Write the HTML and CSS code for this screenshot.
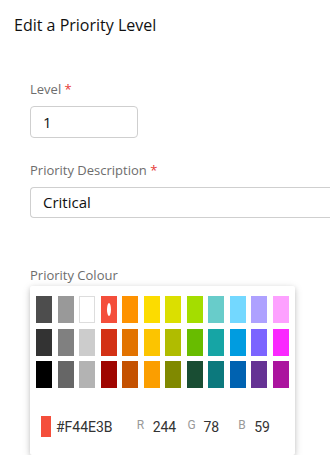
FILE: index.html
```html
<!DOCTYPE html>
<html lang="en">
<head>
    <meta charset="UTF-8">
    <meta name="viewport" content="width=device-width, initial-scale=1.0">
    <title>Edit a Priority Level</title>
    <link rel="stylesheet" href="styles.css">
</head>
<body>
    <h1 class="page-title">Edit a Priority Level</h1>

    <form class="priority-form">
        <div class="field field-level">
            <label class="field-label">Level <span class="required">*</span></label>
            <div class="input input-level">1</div>
        </div>

        <div class="field field-description">
            <label class="field-label">Priority Description <span class="required">*</span></label>
            <div class="input input-wide">Critical</div>
        </div>

        <div class="field">
            <label class="field-label">Priority Colour</label>
            <div class="picker">
                <div class="swatches">
                    <span class="swatch" style="background:#4D4D4D"></span>
                    <span class="swatch" style="background:#999999"></span>
                    <span class="swatch swatch-white" style="background:#FFFFFF"></span>
                    <span class="swatch selected" style="background:#F44E3B"></span>
                    <span class="swatch" style="background:#FE9200"></span>
                    <span class="swatch" style="background:#FCDC00"></span>
                    <span class="swatch" style="background:#DBDF00"></span>
                    <span class="swatch" style="background:#A4DD00"></span>
                    <span class="swatch" style="background:#68CCCA"></span>
                    <span class="swatch" style="background:#73D8FF"></span>
                    <span class="swatch" style="background:#AEA1FF"></span>
                    <span class="swatch" style="background:#FDA1FF"></span>

                    <span class="swatch" style="background:#333333"></span>
                    <span class="swatch" style="background:#808080"></span>
                    <span class="swatch" style="background:#CCCCCC"></span>
                    <span class="swatch" style="background:#D33115"></span>
                    <span class="swatch" style="background:#E27300"></span>
                    <span class="swatch" style="background:#FCC400"></span>
                    <span class="swatch" style="background:#B0BC00"></span>
                    <span class="swatch" style="background:#68BC00"></span>
                    <span class="swatch" style="background:#16A5A5"></span>
                    <span class="swatch" style="background:#009CE0"></span>
                    <span class="swatch" style="background:#7B64FF"></span>
                    <span class="swatch" style="background:#FA28FF"></span>

                    <span class="swatch" style="background:#000000"></span>
                    <span class="swatch" style="background:#666666"></span>
                    <span class="swatch" style="background:#B3B3B3"></span>
                    <span class="swatch" style="background:#9F0500"></span>
                    <span class="swatch" style="background:#C45100"></span>
                    <span class="swatch" style="background:#FB9E00"></span>
                    <span class="swatch" style="background:#808900"></span>
                    <span class="swatch" style="background:#194D33"></span>
                    <span class="swatch" style="background:#0C797D"></span>
                    <span class="swatch" style="background:#0062B1"></span>
                    <span class="swatch" style="background:#653294"></span>
                    <span class="swatch" style="background:#AB149E"></span>
                </div>

                <div class="picker-fields">
                    <span class="current-colour"></span>
                    <span class="hex-value">#F44E3B</span>
                    <span class="channel"><span class="channel-label">R</span>244</span>
                    <span class="channel"><span class="channel-label">G</span>78</span>
                    <span class="channel"><span class="channel-label">B</span>59</span>
                </div>
            </div>
        </div>
    </form>
</body>
</html>
```

FILE: styles.css
```css
body {
    font-family: 'Open Sans', sans-serif;
    background-color: #fff;
    color: #111;
    margin: 0;
}

.page-title {
    font-size: 16px;
    font-weight: 400;
    margin: 0;
    padding: 15px 14px 0;
    line-height: 20px;
}

.priority-form {
    padding: 46px 0 0 30px;
}

.field-level {
    margin-bottom: 24px;
}

.field-description {
    margin-bottom: 49px;
}

.field-label {
    display: block;
    font-size: 13px;
    line-height: 16px;
    color: #6d6d6d;
    margin-bottom: 9px;
}

.required {
    color: #e53935;
}

.input {
    box-sizing: border-box;
    height: 32px;
    border: 1px solid #cfcfcf;
    border-radius: 4px;
    padding: 0 12px;
    font-size: 15px;
    line-height: 30px;
    color: #111;
}

.input-level {
    width: 108px;
}

.input-wide {
    width: 300px;
    height: 31px;
    line-height: 29px;
    border-right: none;
    border-radius: 4px 0 0 4px;
}

.picker {
    width: 265px;
    box-sizing: border-box;
    padding: 10px 6px 0;
    height: 169px;
    border-radius: 2px;
    box-shadow: 0 2px 10px rgba(0, 0, 0, 0.12), 0 2px 5px rgba(0, 0, 0, 0.16);
    margin-top: -6px;
}

.swatches {
    display: grid;
    grid-template-columns: repeat(12, 1fr);
    column-gap: 5.5px;
    row-gap: 5.5px;
}

.swatch {
    height: 27px;
    position: relative;
}

.swatch-white {
    box-shadow: inset 0 0 0 1px #ddd;
}

.swatch.selected::after {
    content: '';
    position: absolute;
    left: 50%;
    top: 50%;
    width: 4px;
    height: 13px;
    margin: -6.5px 0 0 -2px;
    border-radius: 50%;
    background: #fff;
}

.picker-fields {
    display: flex;
    align-items: center;
    margin-top: 28px;
    padding-left: 5px;
    font-family: Roboto, sans-serif;
    font-size: 14px;
    color: #333;
}

.current-colour {
    width: 10px;
    height: 21px;
    background: #F44E3B;
    margin-right: 5px;
}

.hex-value {
    width: 81px;
}

.channel {
    width: 51px;
}

.channel-label {
    display: inline-block;
    width: 16px;
    font-size: 12px;
    color: #999;
    vertical-align: 3px;
}
```
